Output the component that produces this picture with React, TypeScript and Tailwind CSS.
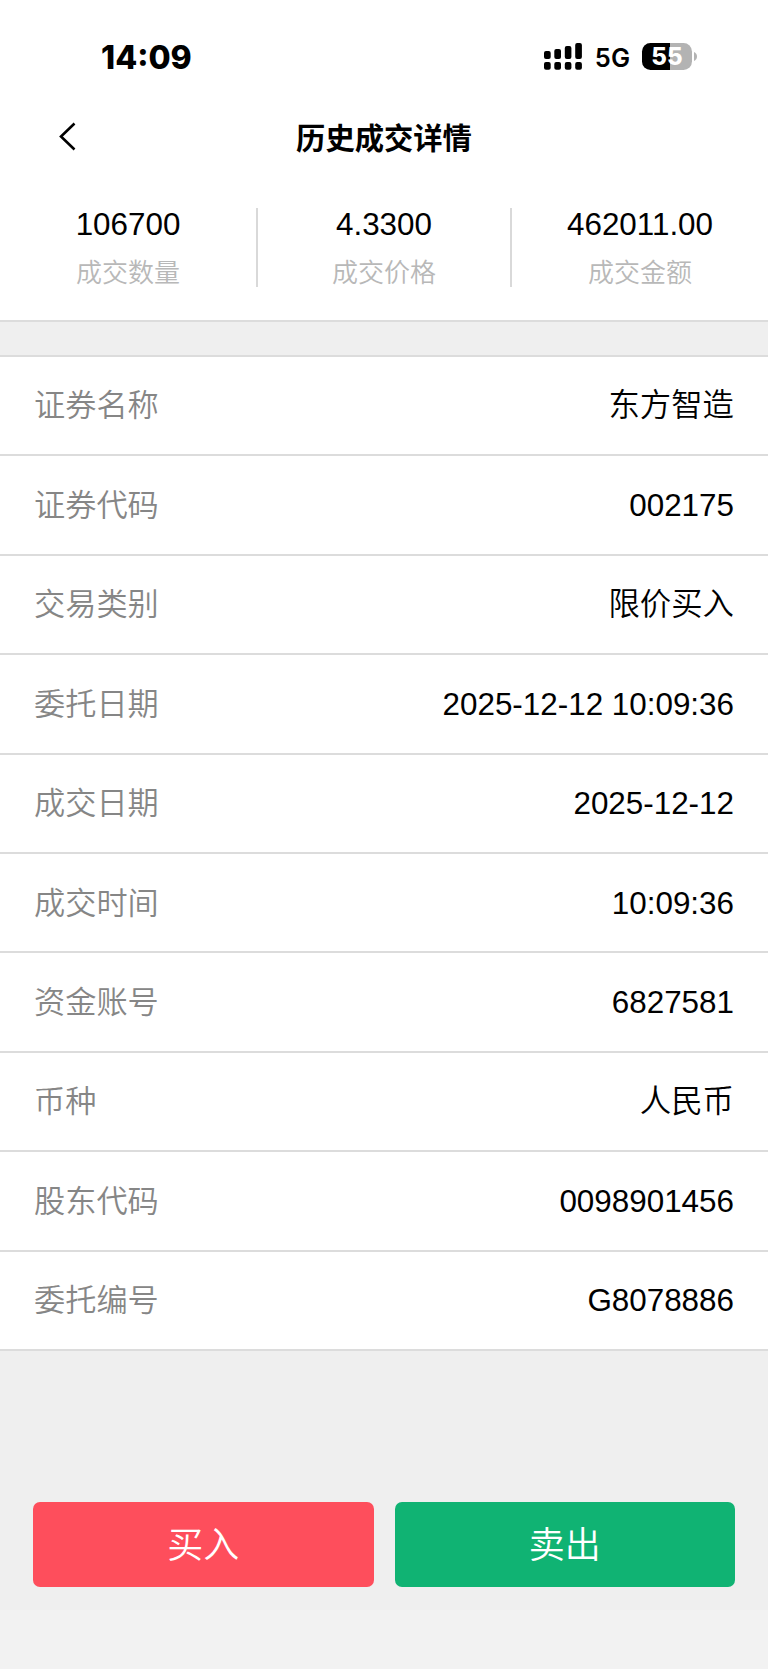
import React from 'react';

interface Field {
  label: string;
  value: string;
}

const summary: Field[] = [
  { label: '成交数量', value: '106700' },
  { label: '成交价格', value: '4.3300' },
  { label: '成交金额', value: '462011.00' },
];

const details: Field[] = [
  { label: '证券名称', value: '东方智造' },
  { label: '证券代码', value: '002175' },
  { label: '交易类别', value: '限价买入' },
  { label: '委托日期', value: '2025-12-12 10:09:36' },
  { label: '成交日期', value: '2025-12-12' },
  { label: '成交时间', value: '10:09:36' },
  { label: '资金账号', value: '6827581' },
  { label: '币种', value: '人民币' },
  { label: '股东代码', value: '0098901456' },
  { label: '委托编号', value: 'G8078886' },
];

const SignalIcon: React.FC = () => (
  <svg width="38" height="27" viewBox="0 0 38 27" fill="black">
    <rect x="0" y="8" width="6.7" height="8" rx="2" />
    <rect x="10.3" y="6" width="6.7" height="10" rx="2" />
    <rect x="20.8" y="3" width="6.6" height="13" rx="2" />
    <rect x="31.2" y="0" width="6.7" height="16" rx="2" />
    {/* Second SIM */}
    <rect x="0" y="19" width="6.7" height="7.7" rx="2" />
    <rect x="10.3" y="19" width="6.7" height="7.7" rx="2" />
    <rect x="20.8" y="19" width="6.6" height="7.7" rx="2" />
    <rect x="31.2" y="19" width="6.7" height="7.7" rx="2" />
  </svg>
);

const Battery: React.FC = () => (
  <div className="flex items-center">
    <div className="flex h-[27px] w-[50px] items-center justify-center rounded-[8.5px] bg-[linear-gradient(90deg,#000_56%,#b3b3b3_56%)] text-[24px] leading-none font-extrabold text-white">
      55
    </div>
    <svg className="ml-[2px]" width="3" height="9" viewBox="0 0 3 9" fill="#b3b3b3">
      <path d="M0 0C1.8.8 3 2.5 3 4.5S1.8 8.2 0 9Z" />
    </svg>
  </div>
);

const StatusBar: React.FC = () => (
  <div className="flex h-[113px] items-center justify-between pr-[71px] pl-[101px] font-['Inter',sans-serif]">
    <span className="pt-[3px] text-[32px] leading-none font-extrabold">14:09</span>
    <div className="flex items-center">
      <SignalIcon />
      <span className="mr-[12px] ml-[13px] pt-[3px] text-[25.5px] leading-none font-semibold">5G</span>
      <Battery />
    </div>
  </div>
);

const App: React.FC = () => {
  return (
    <div className="flex h-[1669px] w-[768px] flex-col overflow-hidden bg-[#f2f2f2] font-['Liberation_Sans','Noto_Sans_CJK_SC',sans-serif] text-black">
      <header className="bg-white">
        <StatusBar />
        <div className="grid h-[48px] grid-cols-[1fr_auto_1fr] items-center">
          <svg className="ml-[59px]" width="17" height="30" viewBox="0 0 17 30" fill="none" stroke="black" strokeWidth="2.6">
            <path d="M15.5 1.5L2 14.5L15.5 27.5" />
          </svg>
          <h1 className="pt-[3px] text-[29.3px] leading-none font-bold">历史成交详情</h1>
        </div>
      </header>

      <section className="grid h-[161px] grid-cols-3 items-start border-b-2 border-[#dcdcdc] bg-white pt-[47px]">
        {summary.map((item, index) => (
          <div
            key={item.label}
            className={`flex h-[79px] flex-col items-center border-[#d9d9d9] pt-px ${index === 1 ? 'border-x-2' : ''}`}
          >
            <span className="text-[31.4px] leading-[32px]">{item.value}</span>
            <span className="mt-[16px] text-[26px] leading-[32px] font-[350] text-[#b8b8b8]">{item.label}</span>
          </div>
        ))}
      </section>

      <main className="h-[1288px] bg-[#efefef]">
        <div className="h-[34.8px] border-b-2 border-[#dcdcdc]" />
        <div>
          {details.map((item) => (
            <div
              key={item.label}
              className="flex h-[99.45px] items-center justify-between border-b-2 border-[#dcdcdc] bg-white px-[34px] pt-px"
            >
              <span className="text-[31.2px] leading-none font-[350] text-[#868686]">{item.label}</span>
              <span className="text-[31.4px] leading-none font-[350]">{item.value}</span>
            </div>
          ))}
        </div>

        <div className="mt-[151px] grid grid-cols-2 gap-[21px] px-[33px]">
          <button className="h-[85px] rounded-[7px] bg-[#fe4e5c] pt-[3px] text-[36px] leading-none font-[350] text-white">买入</button>
          <button className="h-[85px] rounded-[7px] bg-[#10b373] pt-[3px] text-[36px] leading-none font-[350] text-white">卖出</button>
        </div>
      </main>
    </div>
  );
};

export default App;
